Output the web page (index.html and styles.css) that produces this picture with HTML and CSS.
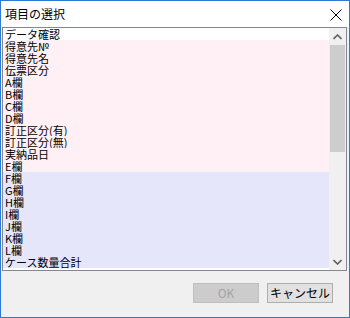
FILE: index.html
```html
<!DOCTYPE html>
<html lang="ja">
<head>
<meta charset="utf-8">
<link rel="stylesheet" href="styles.css">
</head>
<body>
<div class="window">
  <div class="titlebar">
    <span class="title">項目の選択</span>
    <svg class="close" width="12" height="12" viewBox="0 0 12 12"><path d="M0.5 0.5 L11.5 11.5 M11.5 0.5 L0.5 11.5" stroke="#000" stroke-width="1" fill="none"/></svg>
  </div>
  <div class="client">
    <div class="listbox">
      <div class="items">
        <div class="row">データ確認</div>
        <div class="row pink">得意先№</div>
        <div class="row pink">得意先名</div>
        <div class="row pink">伝票区分</div>
        <div class="row pink">A欄</div>
        <div class="row pink">B欄</div>
        <div class="row pink">C欄</div>
        <div class="row pink">D欄</div>
        <div class="row pink">訂正区分(有)</div>
        <div class="row pink">訂正区分(無)</div>
        <div class="row pink">実納品日</div>
        <div class="row pink">E欄</div>
        <div class="row lav">F欄</div>
        <div class="row lav">G欄</div>
        <div class="row lav">H欄</div>
        <div class="row lav">I欄</div>
        <div class="row lav">J欄</div>
        <div class="row lav">K欄</div>
        <div class="row lav">L欄</div>
        <div class="row lav">ケース数量合計</div>
      </div>
      <div class="scrollbar">
        <div class="sbtn"><svg width="9" height="6" viewBox="0 0 9 6"><path d="M0.5 5 L4.5 1 L8.5 5" stroke="#606060" stroke-width="1.6" fill="none"/></svg></div>
        <div class="track"><div class="thumb"></div></div>
        <div class="sbtn"><svg width="9" height="6" viewBox="0 0 9 6"><path d="M0.5 1 L4.5 5 L8.5 1" stroke="#606060" stroke-width="1.6" fill="none"/></svg></div>
      </div>
    </div>
    <div class="footer">
      <button class="btn disabled">OK</button>
      <button class="btn">キャンセル</button>
    </div>
  </div>
</div>
</body>
</html>
```
FILE: styles.css
```css
html, body {
  margin: 0;
  padding: 0;
  background: #f0f0f0;
}
.window {
  width: 350px;
  height: 318px;
  box-sizing: border-box;
  border: 1px solid #2b7bd5;
  display: flex;
  flex-direction: column;
  font-family: "Noto Sans CJK JP", "Noto Sans", sans-serif;
  font-size: 12px;
  color: #000;
}
.titlebar {
  height: 26px;
  background: #fff;
  display: flex;
  align-items: center;
  justify-content: space-between;
  padding: 0 7px 0 4px;
}
.title {
  font-size: 12px;
  line-height: 14px;
  margin-top: -1px;
}
.close {
  display: block;
  margin-top: 1px;
}
.client {
  flex: 1;
  display: flex;
  flex-direction: column;
  background: #f0f0f0;
  padding: 0 1px 0 1px;
}
.listbox {
  height: 244px;
  box-sizing: border-box;
  border: 1px solid #828790;
  background: #fff;
  display: flex;
  margin-right: 1px;
  overflow: hidden;
}
.items {
  flex: 1;
  display: flex;
  flex-direction: column;
}
.row {
  height: 12px;
  line-height: 12px;
  font-size: 11px;
  padding-left: 2px;
  white-space: nowrap;
}
.pink { background: #fff0f5; }
.lav { background: #e6e6fa; }
.scrollbar {
  width: 17px;
  display: flex;
  flex-direction: column;
  background: #f0f0f0;
}
.sbtn {
  height: 17px;
  display: flex;
  align-items: center;
  justify-content: center;
}
.track {
  flex: 1;
  padding: 0 1px;
}
.thumb {
  height: 107px;
  background: #cdcdcd;
}
.footer {
  flex: 1;
  display: flex;
  justify-content: flex-end;
  align-items: flex-start;
  gap: 8px;
  padding: 12px 15px 0 0;
}
.btn {
  width: 66px;
  height: 20px;
  box-sizing: border-box;
  margin: 0;
  padding: 0;
  font-family: "Noto Sans CJK JP", "Noto Sans", sans-serif;
  font-size: 12px;
  line-height: 16px;
  background: #e1e1e1;
  border: 1px solid #adadad;
  color: #000;
}
.btn.disabled {
  background: #cccccc;
  border-color: #bfbfbf;
  color: #a3a3a3;
}
```
